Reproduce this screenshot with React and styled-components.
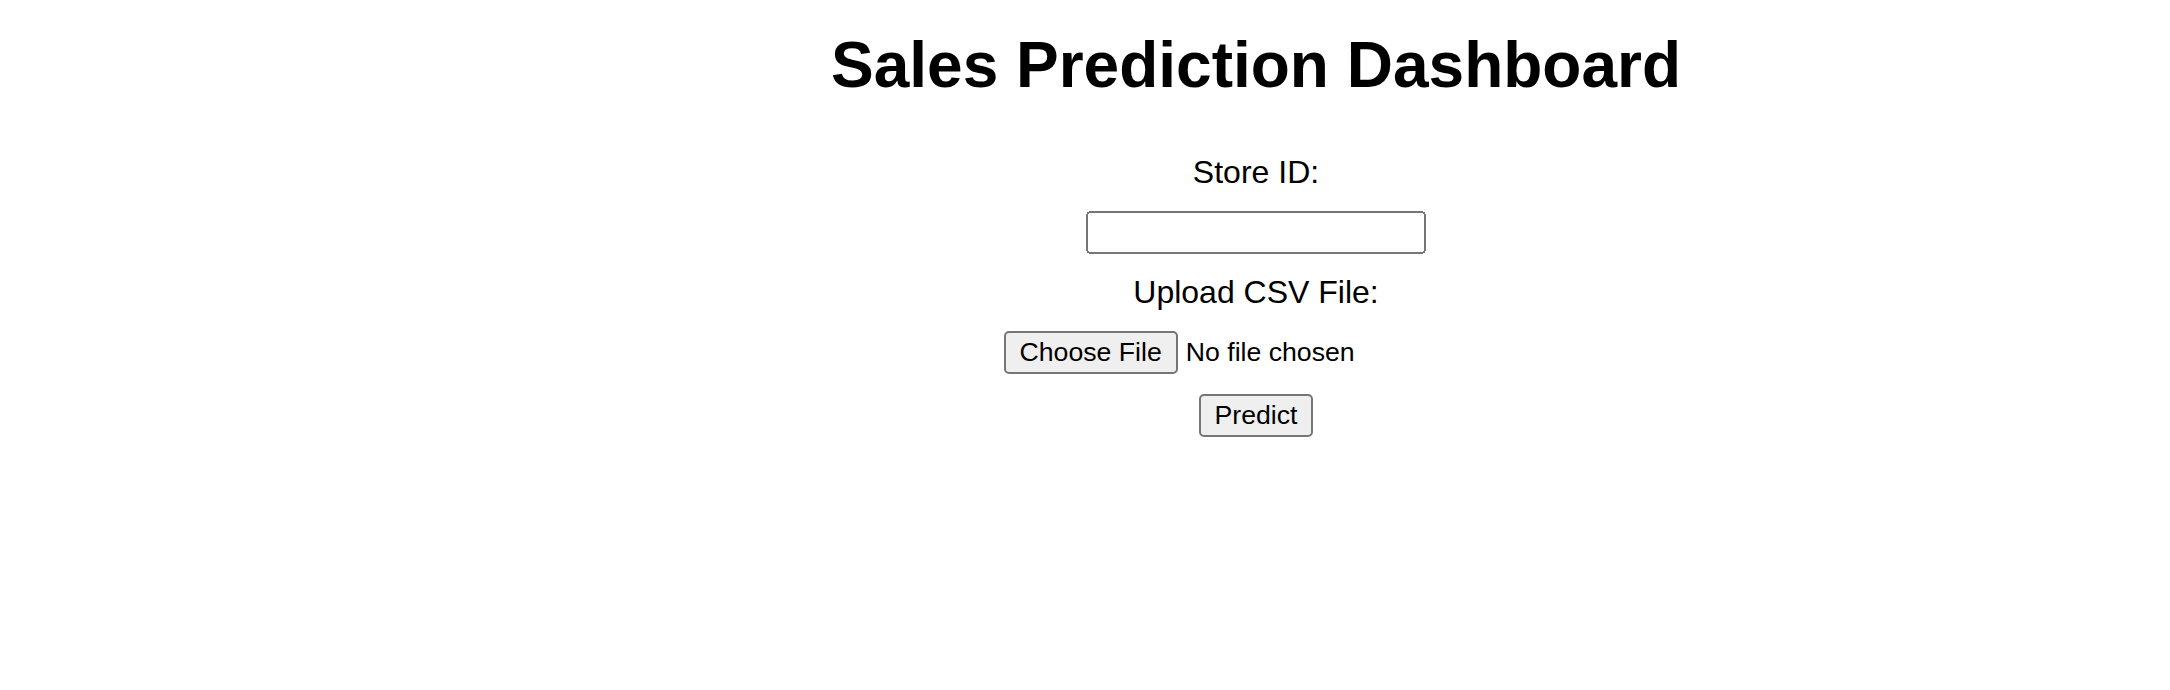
import styled, { createGlobalStyle } from 'styled-components';

const GlobalStyle = createGlobalStyle`
    html, body {
        margin: 0;
        padding: 0;
        background: #ffffff;
    }
`;

const Page = styled.div`
    zoom: 2;
    padding: 14px 0 0 171px;
    font-family: "Liberation Sans", Arial, sans-serif;
    color: #000000;
    text-align: center;
`;

const Title = styled.h1`
    margin: 0 0 26px;
    font-size: 32px;
    font-weight: bold;
    line-height: normal;
`;

const Form = styled.form`
    display: flex;
    flex-direction: column;
    align-items: center;
    gap: 10px;
`;

const Label = styled.label`
    font-size: 16px;
    line-height: normal;
`;

const TextInput = styled.input`
    box-sizing: border-box;
    width: 170px;
    font-family: "Liberation Sans", Arial, sans-serif;
    font-size: 13.333px;
`;

const FileInput = styled.input`
    font-family: "Liberation Sans", Arial, sans-serif;
    font-size: 13.333px;
`;

const Button = styled.button`
    font-family: "Liberation Sans", Arial, sans-serif;
    font-size: 13.333px;
`;

export default function App() {
    return (
        <>
            <GlobalStyle />
            <Page>
                <Title>Sales Prediction Dashboard</Title>
                <Form onSubmit={(e) => e.preventDefault()}>
                    <Label htmlFor="store">Store ID:</Label>
                    <TextInput type="text" id="store" />
                    <Label htmlFor="csv">Upload CSV File:</Label>
                    <FileInput type="file" id="csv" accept=".csv" />
                    <Button type="submit">Predict</Button>
                </Form>
            </Page>
        </>
    );
}
